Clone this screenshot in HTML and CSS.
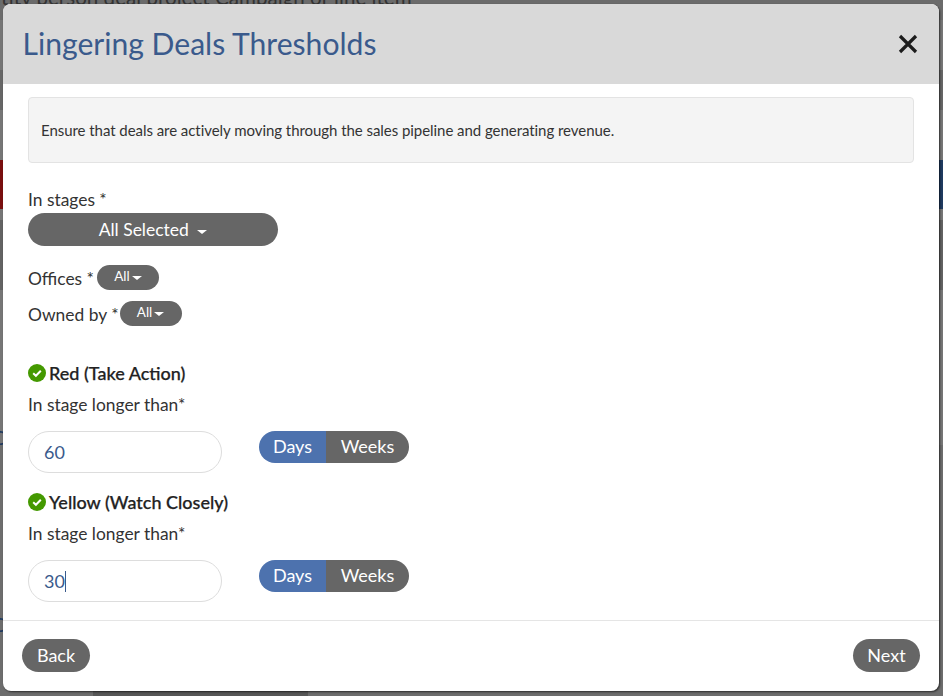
FILE: index.html
```html
<!DOCTYPE html>
<html lang="en">
<head>
  <meta charset="UTF-8">
  <meta name="viewport" content="width=device-width, initial-scale=1.0">
  <title>Lingering Deals Thresholds</title>
  <link rel="stylesheet" href="styles.css">
</head>
<body>
  <!-- Page behind the dialog, mostly hidden -->
  <div class="backdrop">
    <p class="backdrop-text">Entity person deal project Campaign or line item</p>
    <div class="backdrop-bar backdrop-red"></div>
    <div class="backdrop-bar backdrop-blue"></div>
    <span class="backdrop-glyph glyph-one">C</span>
    <span class="backdrop-glyph glyph-two">C</span>
    <span class="backdrop-floor"></span>
  </div>

  <div class="modal">
    <div class="modal-header">
      <h1>Lingering Deals Thresholds</h1>
      <button type="button" class="close-btn" aria-label="Close">
        <svg width="20" height="20" viewBox="0 0 20 20"><path d="M2 2 L18 18 M18 2 L2 18" stroke="#1c1c1c" stroke-width="3.2" fill="none"/></svg>
      </button>
    </div>

    <div class="modal-body">
      <div class="info-box">Ensure that deals are actively moving through the sales pipeline and generating revenue.</div>

      <label class="stages-label">In stages *</label>
      <button type="button" class="pill pill-wide">All Selected <span class="caret"></span></button>

      <div class="inline-row offices-row">
        <label>Offices *</label>
        <button type="button" class="pill pill-small">All<span class="caret"></span></button>
      </div>
      <div class="inline-row owned-row">
        <label>Owned by *</label>
        <button type="button" class="pill pill-small">All<span class="caret"></span></button>
      </div>

      <h2 class="level-title level-red">
        <svg class="check" width="18" height="18" viewBox="0 0 18 18"><circle cx="9" cy="9" r="9" fill="#449900"/><path d="M5.2 9.3 L7.9 11.8 L12.8 6.8" stroke="#fff" stroke-width="2" fill="none"/></svg>
        Red (Take Action)
      </h2>
      <label class="longer-label">In stage longer than*</label>
      <div class="threshold-row">
        <input class="num-input" type="text" value="60">
        <div class="toggle">
          <span class="toggle-days">Days</span>
          <span class="toggle-weeks">Weeks</span>
        </div>
      </div>

      <h2 class="level-title level-yellow">
        <svg class="check" width="18" height="18" viewBox="0 0 18 18"><circle cx="9" cy="9" r="9" fill="#449900"/><path d="M5.2 9.3 L7.9 11.8 L12.8 6.8" stroke="#fff" stroke-width="2" fill="none"/></svg>
        Yellow (Watch Closely)
      </h2>
      <label class="longer-label">In stage longer than*</label>
      <div class="threshold-row">
        <div class="num-input num-focused">30<span class="text-cursor"></span></div>
        <div class="toggle">
          <span class="toggle-days">Days</span>
          <span class="toggle-weeks">Weeks</span>
        </div>
      </div>
    </div>

    <div class="modal-footer">
      <button type="button" class="pill footer-btn">Back</button>
      <button type="button" class="pill footer-btn footer-next">Next</button>
    </div>
  </div>
</body>
</html>
```

FILE: styles.css
```css
/* Global Styles */
* {
  margin: 0;
  padding: 0;
  box-sizing: border-box;
}

html, body {
  height: 696px;
  overflow: hidden;
}

body {
  font-family: Lato, "Open Sans", sans-serif;
  background: linear-gradient(#6b6b6b 0 20px, #767676 20px 70px, #666 70px 110px, #767676 110px 220px, #636363 220px 290px, #767676 290px 445px, #6d6d6d 445px);
  color: #333;
  font-size: 17.4px;
  padding: 4px 4px 5px 3px;
}

/* Behind the dialog */
.backdrop-text {
  position: absolute;
  left: -22px;
  top: -15px;
  font-size: 20.6px;
  line-height: 24px;
  color: #333;
  white-space: nowrap;
}

.backdrop-bar {
  position: absolute;
  top: 160px;
  height: 49px;
}

.backdrop-red {
  left: 0;
  width: 3px;
  background-color: #7a0f0f;
}

.backdrop-blue {
  right: 0;
  width: 4px;
  background-color: #1f3a5f;
}

.backdrop-glyph {
  position: absolute;
  left: -8px;
  font-size: 20px;
  line-height: 20px;
  color: #1f3a5f;
}

.glyph-one {
  top: 427px;
}

.glyph-two {
  top: 614px;
}

.backdrop-floor {
  position: absolute;
  left: 93px;
  bottom: 0;
  width: 215px;
  height: 5px;
  background-color: #575757;
}

/* Dialog */
.modal {
  position: relative;
  height: 687px;
  display: flex;
  flex-direction: column;
  background: #fff;
  border-radius: 8px;
  box-shadow: 1px 1px 2px rgba(0, 0, 0, 0.6);
}

.modal-header {
  height: 80px;
  flex-shrink: 0;
  display: flex;
  align-items: center;
  justify-content: space-between;
  padding: 0 21px 1px 19.5px;
  background-color: #d9d9d9;
  border-radius: 8px 8px 0 0;
}

.modal-header h1 {
  font-size: 30.1px;
  font-weight: 400;
  color: #3a5a8c;
  margin-bottom: 2px;
}

.close-btn {
  display: flex;
  background: none;
  border: none;
  cursor: pointer;
}

.modal-body {
  flex: 1;
  padding: 13px 25px 0;
}

.info-box {
  height: 66px;
  display: flex;
  align-items: center;
  padding: 0 12px;
  font-size: 15px;
  letter-spacing: -0.05px;
  background-color: #f4f4f4;
  border: 1px solid #e3e3e3;
  border-radius: 4px;
}

label {
  display: block;
  height: 20px;
  line-height: 22px;
}

.stages-label {
  margin-top: 27px;
  line-height: 20px;
}

.pill {
  font-family: inherit;
  color: #fff;
  background-color: #666;
  border: none;
  border-radius: 17px;
  cursor: pointer;
}

.pill-wide {
  display: block;
  width: 250px;
  height: 33px;
  margin-top: 3px;
  font-size: 17.5px;
}

.pill-small {
  width: 62px;
  height: 25px;
  font-size: 13.5px;
  padding-bottom: 3px;
}

.pill-small .caret {
  margin-left: 2px;
  border-left-width: 5.5px;
  border-right-width: 5.5px;
}

.caret {
  display: inline-block;
  width: 0;
  height: 0;
  margin-left: 4px;
  vertical-align: middle;
  border-top: 4px solid #fff;
  border-left: 5px solid transparent;
  border-right: 5px solid transparent;
}

.inline-row {
  display: flex;
  align-items: center;
  gap: 3px;
}

.offices-row {
  margin-top: 19px;
}

.owned-row {
  margin-top: 11px;
  gap: 1px;
}

.level-title {
  display: flex;
  align-items: center;
  gap: 3px;
  font-size: 18px;
  font-weight: 500;
  line-height: 20px;
  color: #222;
  -webkit-text-stroke: 0.25px #222;
}

.level-red {
  margin-top: 37px;
}

.level-yellow {
  margin-top: 19px;
}

.longer-label {
  margin-top: 11px;
}

.threshold-row {
  display: flex;
  align-items: flex-start;
  gap: 37px;
  margin-top: 17px;
}

.num-input {
  display: flex;
  align-items: center;
  width: 194px;
  height: 42px;
  padding: 0 15px;
  font-family: inherit;
  font-size: 18px;
  color: #3a5a8c;
  border: 1px solid #ddd;
  border-radius: 21px;
  outline: none;
}

.text-cursor {
  display: inline-block;
  width: 1px;
  height: 21px;
  background-color: #3a5a8c;
}

.toggle {
  display: flex;
  height: 32px;
  line-height: 30px;
  font-size: 18px;
  color: #fff;
  border-radius: 16px;
  overflow: hidden;
}

.toggle-days {
  width: 67px;
  text-align: center;
  background-color: #4d72ae;
}

.toggle-weeks {
  width: 83px;
  text-align: center;
  background-color: #666;
}

.modal-footer {
  height: 71px;
  flex-shrink: 0;
  display: flex;
  align-items: flex-start;
  justify-content: space-between;
  padding: 18px 19px 0;
  border-top: 1px solid #e5e5e5;
}

.footer-btn {
  width: 68px;
  height: 33px;
  padding-bottom: 2px;
  font-size: 18px;
}

.footer-next {
  width: 67px;
}
```
